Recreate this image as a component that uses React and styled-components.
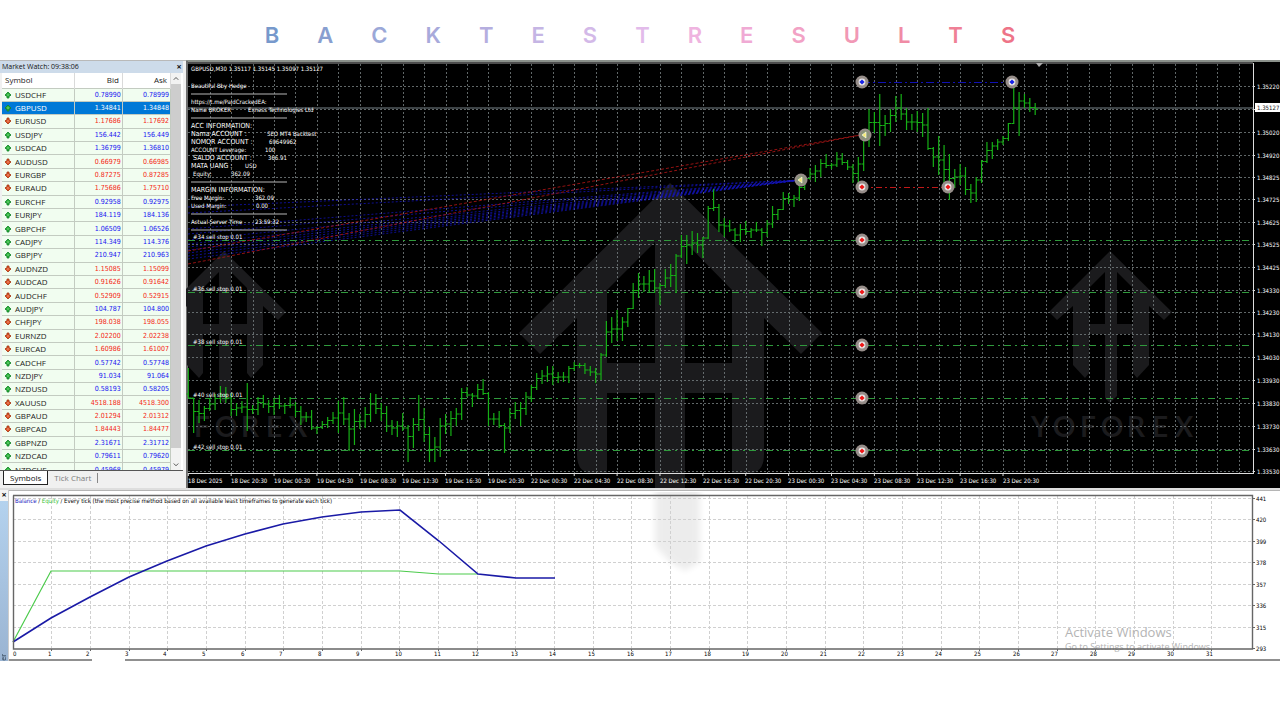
import React from 'react';
import styled, { createGlobalStyle } from 'styled-components';

const quotes = [
  ['USDCHF', '0.78990', '0.78999', 'up'],
  ['GBPUSD', '1.34841', '1.34848', 'up'],
  ['EURUSD', '1.17686', '1.17692', 'down'],
  ['USDJPY', '156.442', '156.449', 'up'],
  ['USDCAD', '1.36799', '1.36810', 'up'],
  ['AUDUSD', '0.66979', '0.66985', 'down'],
  ['EURGBP', '0.87275', '0.87285', 'down'],
  ['EURAUD', '1.75686', '1.75710', 'down'],
  ['EURCHF', '0.92958', '0.92975', 'up'],
  ['EURJPY', '184.119', '184.136', 'up'],
  ['GBPCHF', '1.06509', '1.06526', 'up'],
  ['CADJPY', '114.349', '114.376', 'up'],
  ['GBPJPY', '210.947', '210.963', 'up'],
  ['AUDNZD', '1.15085', '1.15099', 'down'],
  ['AUDCAD', '0.91626', '0.91642', 'down'],
  ['AUDCHF', '0.52909', '0.52915', 'down'],
  ['AUDJPY', '104.787', '104.800', 'up'],
  ['CHFJPY', '198.038', '198.055', 'down'],
  ['EURNZD', '2.02200', '2.02238', 'down'],
  ['EURCAD', '1.60986', '1.61007', 'down'],
  ['CADCHF', '0.57742', '0.57748', 'up'],
  ['NZDJPY', '91.034', '91.064', 'up'],
  ['NZDUSD', '0.58193', '0.58205', 'up'],
  ['XAUUSD', '4518.188', '4518.300', 'down'],
  ['GBPAUD', '2.01294', '2.01312', 'down'],
  ['GBPCAD', '1.84443', '1.84477', 'down'],
  ['GBPNZD', '2.31671', '2.31712', 'up'],
  ['NZDCAD', '0.79611', '0.79620', 'up'],
  ['NZDCHF', '0.45968', '0.45979', 'up'],
];

// [high, low] of every M30 bar, in chart units
const bars = [
  [368, 398], [398, 433], [400, 423], [406, 421], [398, 411], [394, 410], [386, 403], [387, 403],
  [393, 416], [403, 416], [401, 413], [383, 431], [405, 414], [397, 415], [395, 408], [400, 413],
  [398, 415], [395, 409], [403, 414], [397, 408], [402, 417], [406, 425], [412, 422], [410, 430],
  [426, 434], [421, 429], [417, 428], [412, 424], [401, 433], [397, 425], [413, 451], [409, 445],
  [414, 429], [407, 428], [393, 422], [394, 414], [403, 421], [406, 432], [420, 435], [421, 437],
  [413, 431], [425, 462], [418, 448], [395, 431], [408, 442], [427, 462], [437, 462], [418, 457],
  [414, 434], [411, 436], [408, 426], [388, 420], [387, 397], [393, 407], [384, 399], [379, 395],
  [392, 426], [413, 425], [411, 428], [423, 453], [408, 433], [402, 419], [402, 426], [392, 415],
  [385, 402], [373, 390], [370, 384], [366, 382], [366, 385], [372, 383], [372, 382], [366, 383],
  [362, 371], [363, 368], [363, 374], [366, 376], [368, 383], [353, 380], [321, 357], [317, 343],
  [310, 341], [317, 341], [308, 327], [283, 309], [273, 298], [276, 292], [270, 292], [269, 293],
  [283, 305], [269, 288], [264, 287], [254, 293], [235, 258], [235, 264], [231, 255], [233, 253],
  [237, 258], [206, 239], [189, 211], [204, 232], [218, 237], [220, 232], [228, 242], [224, 242],
  [221, 235], [228, 238], [222, 232], [228, 246], [220, 237], [206, 228], [209, 220], [192, 210],
  [193, 204], [195, 207], [185, 201], [177, 190], [168, 180], [165, 182], [159, 177], [154, 168],
  [163, 169], [152, 167], [153, 165], [160, 170], [164, 183], [157, 185], [132, 171], [109, 147],
  [112, 133], [94, 146], [115, 136], [109, 132], [96, 122], [94, 120], [108, 130], [114, 130],
  [111, 132], [113, 137], [108, 150], [147, 167], [136, 175], [145, 185], [154, 200], [169, 188],
  [164, 185], [167, 195], [184, 203], [177, 202], [160, 183], [142, 163], [142, 159], [139, 150],
  [136, 145], [123, 141], [85, 124], [92, 136], [94, 108], [98, 112], [103, 115],
];

const prices = [
  ['1.35220', 86], ['', 109], ['1.35020', 132], ['1.34920', 155], ['1.34825', 177],
  ['1.34725', 199], ['1.34625', 222], ['1.34525', 244], ['1.34425', 267], ['1.34330', 290],
  ['1.34230', 312], ['1.34130', 334], ['1.34030', 357], ['1.33930', 380], ['1.33830', 403],
  ['1.33730', 426], ['1.33630', 449], ['1.33530', 471],
];

const times = [
  '18 Dec 2025', '18 Dec 20:30', '19 Dec 00:30', '19 Dec 04:30', '19 Dec 08:30', '19 Dec 12:30',
  '19 Dec 16:30', '19 Dec 20:30', '22 Dec 00:30', '22 Dec 04:30', '22 Dec 08:30', '22 Dec 12:30',
  '22 Dec 16:30', '22 Dec 20:30', '23 Dec 00:30', '23 Dec 04:30', '23 Dec 08:30', '23 Dec 12:30',
  '23 Dec 16:30', '23 Dec 20:30',
];

// label, label x, value, value x, baseline, capitals
const info = [
  ['Beautiful Bby Hedge', 191, '', 0, 88],
  ['https://t.me/PaidCrackedEA:', 191, '', 0, 104],
  ['Name BROKER', 191, 'Exness Technologies Ltd', 248, 112],
  ['ACC INFORMATION:', 191, '', 0, 128, true],
  ['Nama ACCOUNT :', 191, 'SEO MT4 Backtest', 267, 136, true],
  ['NOMOR ACCOUNT :', 191, '69649962', 269, 144, true],
  ['ACCOUNT  Leverage:', 191, '100', 265, 152],
  ['SALDO ACCOUNT :', 193, '366.91', 268, 160, true],
  ['MATA UANG :', 191, 'USD', 245, 168, true],
  ['Equity:', 193, '362.09', 231, 176],
  ['MARGIN INFORMATION:', 191, '', 0, 192, true],
  ['Free Margin:', 191, '362.09', 255, 200],
  ['Used Margin:', 191, '0.00', 256, 208],
  ['Actual Server Time', 191, '23:59:32', 255, 224],
];

const rules = [94, 118, 182, 214, 230];
const stops = [['#34', 240], ['#36', 292], ['#38', 345], ['#40', 398], ['#42', 450]];
const blueStarts = [207, 213, 229, 234, 240, 244, 247, 250, 253, 256, 259];
const markers = [
  [862, 82, 'buy'], [1012, 82, 'buy'], [801, 180, 'close'], [865, 135, 'close'],
  [862, 187, 'sell'], [948, 187, 'sell'], [862, 240, 'sell'], [862, 292, 'sell'],
  [862, 345, 'sell'], [862, 398, 'sell'], [862, 451, 'sell'],
];

const balance = '13,642 51,618 90,597 129,577 167,561 206,546 245,534 283,524 322,517 361,512 400,510 439,541 478,574 516,578 555,578';
const equity = '13,642 51,571 400,571 439,574 478,574';
const levels = [['441', 498], ['420', 519], ['399', 541], ['378', 562], ['357', 584], ['336', 605], ['315', 627], ['293', 648]];

const heading = [
  ['B', '#7799cc'], ['A', '#889fd0'], ['C', '#9ba8d8'], ['K', '#a8aadb'], ['T', '#b5aedf'],
  ['E', '#c5b5e4'], ['S', '#d3b9e8'], ['T', '#e2bbea'], ['R', '#efb4e0'], ['E', '#f0aad4'],
  ['S', '#f2a2c5'], ['U', '#f198b5'], ['L', '#f08ba5'], ['T', '#ef8096'], ['S', '#ee7488'],
];

const barX = (i) => 188.3 + i * 5.36;

const closeOf = (i) => {
  const next = bars[i + 1] || bars[i];
  const mid = (Math.max(bars[i][0], next[0]) + Math.min(bars[i][1], next[1])) / 2;
  return Math.min(bars[i][1], Math.max(bars[i][0], mid));
};

const barPath = bars
  .map(([high, low], i) => {
    const x = barX(i);
    const open = i ? Math.min(low, Math.max(high, closeOf(i - 1))) : high + 26;
    return `M${x} ${high}V${low}M${x - 2} ${open}H${x}M${x} ${closeOf(i)}H${x + 3}`;
  })
  .join('');

const QuoteIcon = ({ direction }) => {
  const color = direction === 'up' ? '#2db43c' : '#e0552b';
  const edge = direction === 'up' ? '#13802a' : '#a33612';
  const d = direction === 'up' ? 'M4 1L7 4L6 5H5V7H3V5H2L1 4Z' : 'M3 1H5V3H6L7 4L4 7L1 4L2 3H3Z';
  return (
    <Icon viewBox="0 0 8 8" aria-hidden="true">
      <path d={d} fill={color} stroke={edge} strokeWidth="0.8" />
      <circle cx="4" cy="4" r="0.8" fill="#fff" opacity="0.4" />
    </Icon>
  );
};

const SmallLogo = ({ x, from = 0 }) => (
  <g transform={`translate(${x} 0)`}>
    <path d="M0 251L62 312L54 320L39 306V365L27 378L23 373V334H7V396L0 403L-5 398V334H-21V373L-25 378L-37 365V306L-53 320L-61 312ZM-5 272L-21 288V324H-5ZM7 272V324H23V288Z" />
    {'YOFOREX'.split('').map((letter, i) => i >= from && (
      <text key={i} x={-70 + i * 24} y="437">{letter}</text>
    ))}
  </g>
);

const Marker = ({ x, y, kind }) => (
  <g transform={`translate(${x} ${y})`}>
    <circle r="6.5" fill="#968d89" />
    {kind === 'close' ? (
      <>
        <circle r="4.5" fill="#8a9478" />
        <path d="M-3 0L1 -3V3Z" fill="#f3e96b" stroke="#fff" strokeWidth="0.6" />
      </>
    ) : (
      <>
        <circle r="3.4" fill="#fff" opacity="0.8" />
        <path d="M-2.6 0L0 -2.6L2.6 0L0 2.6Z" fill={kind === 'buy' ? '#1520e8' : '#ee1717'} />
      </>
    )}
  </g>
);

const PriceChart = () => (
  <Drawing viewBox="186 60 1094 428" role="img" aria-label="GBPUSD M30 chart">
    <rect x="186" y="60" width="1094" height="428" fill="#000" />
    <path d="M186 61H1280" stroke="#8b918b" strokeWidth="2" />
    <path d="M187 61V488" stroke="#6d6d6d" strokeWidth="2" />
    <path d="M188 63H1253" stroke="#9a9a9a" />

    <Watermark>
      <path d="M670 183L822 333L801 354L764 318V455Q764 474 746 474H732V393H685V488H655V393H607V474H595Q577 474 577 455V318L540 354L519 333ZM655 242L607 290V363H655ZM685 242V363H732V290Z" />
      <SmallLogo x={224} from={2} />
      <SmallLogo x={1110} />
    </Watermark>

    <g stroke="#71797b" strokeDasharray="2 2" opacity="0.85">
      {Array.from({ length: 49 }, (_, i) => (
        <path key={i} d={`M${Math.round(209.7 + i * 21.44) + 0.5} 64V473`} />
      ))}
      {prices.map(([, y]) => <path key={y} d={`M188 ${y + 0.5}H1253`} />)}
    </g>

    <g stroke="#1515c8" strokeDasharray="2 2" strokeWidth="0.8" opacity="0.9">
      {blueStarts.map((y) => <path key={y} d={`M188 ${y}L801 180`} />)}
    </g>
    <g stroke="#c01818" strokeDasharray="3 2" strokeWidth="0.9" opacity="0.85">
      <path d="M188 251L866 134" />
      <path d="M188 264L866 134" />
    </g>
    <path d="M862 82.5H1012" stroke="#1010b4" strokeDasharray="8 3 2 3" />
    <path d="M862 187.5H948" stroke="#c01818" strokeDasharray="6 3 2 3" />
    <path d="M188 108H1253" stroke="#50585c" strokeWidth="1.6" />
    <g stroke="#2f9a3c" strokeDasharray="7 4 2 4">
      {stops.map(([id, y]) => <path key={id} d={`M188 ${y + 0.5}H1253`} />)}
    </g>

    <path d={barPath} stroke="#16b016" strokeWidth="1.2" fill="none" />
    <path d="M1036 63H1043L1039 67Z" fill="#aaa" />
    {markers.map(([x, y, kind]) => <Marker key={`${x}-${y}`} x={x} y={y} kind={kind} />)}

    <path d="M1253.5 63V474M188 473.5H1253" stroke="#ddd" fill="none" />
    <path
      d={times.map((_, i) => `M${barX(i * 8)} 473V476`).join('') + prices.map(([, y]) => `M1253 ${y}.5H1255`).join('')}
      stroke="#ddd"
    />

    <ChartText>
      <text x="191" y="71">GBPUSD,M30  1.35117 1.35145 1.35097 1.35127</text>
      {info.map(([label, x, value, valueX, y, caps]) => (
        <React.Fragment key={label}>
          <InfoLabel x={x} y={y} $caps={caps}>{label}</InfoLabel>
          {value && <text x={valueX} y={y}>{value}</text>}
        </React.Fragment>
      ))}
      {stops.map(([id, y]) => <text key={id} x="193" y={y - 1}>{id} sell stop 0.01</text>)}
      {prices.map(([price, y]) => price && <text key={price} x="1257" y={y + 3}>{price}</text>)}
      {times.map((time, i) => <text key={time} x={188 + Math.round(i * 42.88)} y="483">{time}</text>)}
    </ChartText>
    {rules.map((y) => <path key={y} d={`M191 ${y}H287`} stroke="#b5b5b5" strokeWidth="1.2" />)}
    <rect x="1255" y="103" width="25" height="9" fill="#fff" />
    <CurrentPrice x="1257" y="110">1.35127</CurrentPrice>
  </Drawing>
);

const TesterChart = () => (
  <Drawing viewBox="9 492 1271 167" role="img" aria-label="Balance and equity graph">
    <defs>
      <filter id="soft" x="-20%" y="-20%" width="140%" height="140%">
        <feGaussianBlur stdDeviation="3" />
      </filter>
    </defs>
    <g fill="#000" opacity="0.07" filter="url(#soft)">
      <path d="M655 480H700V562L685 571L670 562L655 546Z" />
    </g>
    <g stroke="#d0d0d0" strokeDasharray="3 2">
      {Array.from({ length: 31 }, (_, i) => (
        <path key={i} d={`M${Math.round(51.2 + i * 38.67)}.5 496V648`} />
      ))}
      {levels.slice(0, 7).map(([value, y]) => <path key={value} d={`M13 ${y}.5H1252`} />)}
    </g>
    <polyline points={equity} fill="none" stroke="#4ccb4c" strokeWidth="1.2" />
    <polyline points={balance} fill="none" stroke="#1a1aa6" strokeWidth="1.6" />
    <WindowsNote>
      <text className="big" x="1065" y="637">Activate Windows</text>
      <text className="small" x="1065" y="650">Go to Settings to activate Windows.</text>
    </WindowsNote>
    <path d="M13 495.5H1252.5V649H13.5V495.5" fill="none" stroke="#666" strokeWidth="1.4" />
    <path
      d={levels.map(([, y]) => `M1252 ${y}.5H1255`).join('') + Array.from({ length: 31 }, (_, i) => `M${Math.round(51.2 + i * 38.67)}.5 649V651`).join('')}
      stroke="#666"
    />
    <TesterText>
      <text x="15" y="503">
        <tspan fill="#1a1ac0">Balance</tspan> / <tspan fill="#35c335">Equity</tspan> / Every tick (the most precise method based on all available least timeframes to generate each tick)
      </text>
      {levels.map(([value, y]) => <text key={value} x="1256" y={y + 3}>{value}</text>)}
      {Array.from({ length: 32 }, (_, i) => (
        <text key={i} x={i ? 9 + Math.round(i * 38.6) : 13} y="656">{i}</text>
      ))}
    </TesterText>
  </Drawing>
);

const App = () => (
  <Page>
    <GlobalStyle />
    <Heading aria-label="BACKTEST RESULTS">
      {heading.map(([letter, color], i) => <Letter key={i} $color={color}>{letter}</Letter>)}
    </Heading>

    <Workspace>
      <MarketWatch>
        <TitleBar>
          <span>Market Watch: 09:38:06</span>
          <CloseButton aria-label="Close market watch">×</CloseButton>
        </TitleBar>
        <QuoteArea>
          <QuoteTable>
            <thead>
              <tr>
                <HeadCell>Symbol</HeadCell>
                <HeadCell $right>Bid</HeadCell>
                <HeadCell $right>Ask</HeadCell>
              </tr>
            </thead>
            <tbody>
              {quotes.map(([symbol, bid, ask, direction]) => (
                <QuoteRow key={symbol} $selected={symbol === 'GBPUSD'}>
                  <SymbolCell>
                    <SymbolName><QuoteIcon direction={direction} />{symbol}</SymbolName>
                  </SymbolCell>
                  <PriceCell $direction={direction}>{bid}</PriceCell>
                  <PriceCell $direction={direction}>{ask}</PriceCell>
                </QuoteRow>
              ))}
            </tbody>
          </QuoteTable>
          <ScrollBar>
            <Chevron viewBox="0 0 8 6"><path d="M1 4L4 1L7 4" /></Chevron>
            <Thumb />
            <Chevron viewBox="0 0 8 6"><path d="M1 1L4 4L7 1" /></Chevron>
          </ScrollBar>
        </QuoteArea>
        <Tabs>
          <Tab $active>Symbols</Tab>
          <Tab>Tick Chart</Tab>
          <TabDivider />
        </Tabs>
      </MarketWatch>
      <ChartPanel><PriceChart /></ChartPanel>
    </Workspace>

    <Tester>
      <TesterSide>
        <CloseButton aria-label="Close tester">×</CloseButton>
        <SideLabel>er</SideLabel>
      </TesterSide>
      <TesterPanel>
        <TesterChart />
        <Footer><FooterGap /></Footer>
      </TesterPanel>
    </Tester>
  </Page>
);

const GlobalStyle = createGlobalStyle`
  * {
    box-sizing: border-box;
  }

  body {
    margin: 0;
    background: #fff;
    font-family: "Open Sans", "Noto Sans", sans-serif;
  }

  button {
    font-family: inherit;
    padding: 0;
    border: 0;
    background: none;
  }
`;

const Page = styled.main`
  min-height: 100vh;
  background: #fff;
`;

const Heading = styled.h1`
  display: flex;
  justify-content: center;
  align-items: center;
  gap: 38px;
  height: 60px;
  margin: 0;
  padding-top: 9px;
  font: 600 22px/26px Inter, sans-serif;
`;

const Letter = styled.span`
  color: ${(p) => p.$color};
`;

const Workspace = styled.section`
  display: flex;
  align-items: stretch;
`;

const MarketWatch = styled.aside`
  display: flex;
  flex-direction: column;
  flex: 0 0 186px;
  height: 428px;
  padding-right: 3px;
  background: #f0f0f0;
  border-top: 1px solid #b9b9b9;
`;

const TitleBar = styled.header`
  display: flex;
  justify-content: space-between;
  align-items: center;
  height: 12px;
  padding: 0 0 0 2px;
  background: #cddbea;
  color: #111;
  font-size: 7px;
  line-height: 10px;
`;

const CloseButton = styled.button`
  width: 8px;
  font-size: 9px;
  font-weight: 700;
  line-height: 8px;
  color: #111;
`;

const QuoteArea = styled.div`
  display: flex;
  flex: 1;
  min-height: 0;
  overflow: hidden;
  margin-left: 2px;
  background: #fff;
`;

const QuoteTable = styled.table`
  flex: 0 0 169px;
  width: 169px;
  height: 404px;
  table-layout: fixed;
  border-collapse: collapse;
  font-size: 8px;
  line-height: 10px;
`;

const HeadCell = styled.th`
  width: ${(p) => (p.$right ? '48px' : '72px')};
  height: 15px;
  padding: 0 3px;
  text-align: ${(p) => (p.$right ? 'right' : 'left')};
  font-weight: 400;
  color: #222;
  border-right: 1px solid #dadada;
`;

const SymbolCell = styled.td`
  padding: 0 2px;
  color: #1c221a;
  border: solid #c3cbc1;
  border-width: 1px 1px 1px 0;
`;

const SymbolName = styled.div`
  display: flex;
  align-items: center;
  gap: 3px;
`;

const PriceCell = styled.td`
  padding: 0 1px;
  text-align: right;
  font: 7px/10px "DejaVu Sans Condensed", "DejaVu Sans", sans-serif;
  color: ${(p) => (p.$direction === 'up' ? '#1414f0' : '#f51d14')};
  border: solid #c3cbc1;
  border-width: 1px 1px 1px 0;
`;

const QuoteRow = styled.tr`
  background: ${(p) => (p.$selected ? '#0078d7' : '#f1fdf0')};

  td {
    ${(p) => p.$selected && 'color: #fff;'}
  }
`;

const Icon = styled.svg`
  flex: none;
  width: 8px;
  height: 8px;
`;

const ScrollBar = styled.div`
  display: flex;
  flex-direction: column;
  align-items: center;
  width: 10px;
  padding: 3px 0 2px;
  background: #f2f2f2;
`;

const Chevron = styled.svg`
  width: 6px;
  height: 6px;
  fill: none;
  stroke: #222;
`;

const Thumb = styled.div`
  width: 10px;
  flex: 1;
  margin: 2px 0 14px;
  background: #cdcdcd;
`;

const Tabs = styled.nav`
  display: flex;
  height: 18px;
  padding: 0 3px 3px;
  border-top: 1px solid #555;
`;

const Tab = styled.button`
  padding: 0 6px;
  font-size: 8px;
  line-height: 12px;
  color: ${(p) => (p.$active ? '#111' : '#7d7d7d')};
  background: ${(p) => (p.$active ? '#fff' : 'transparent')};
  border: solid #222;
  border-width: ${(p) => (p.$active ? '0 1px 1px' : '0')};
`;

const TabDivider = styled.span`
  width: 1px;
  height: 10px;
  margin-top: 2px;
  background: #888;
`;

const ChartPanel = styled.div`
  flex: 1;
  min-width: 0;
  background: #000;
`;

const Drawing = styled.svg`
  display: block;
  width: 100%;
  height: auto;
`;

const Watermark = styled.g`
  fill: #1b1b1d;
  font: 700 28px Lato, sans-serif;
  text-anchor: middle;
`;

const ChartText = styled.g`
  fill: #fff;
  font: 6px "DejaVu Sans Condensed", "DejaVu Sans", sans-serif;
  white-space: pre;
`;

const InfoLabel = styled.text`
  font-size: ${(p) => (p.$caps ? '7px' : '6px')};
`;

const CurrentPrice = styled.text`
  fill: #111;
  font: 6px "DejaVu Sans Condensed", "DejaVu Sans", sans-serif;
`;

const TesterText = styled.g`
  fill: #000;
  font: 6px "DejaVu Sans Condensed", "DejaVu Sans", sans-serif;
`;

const WindowsNote = styled.g`
  fill: #b4b4b4;

  .big {
    font-size: 13px;
  }

  .small {
    font-size: 9px;
  }
`;

const Tester = styled.section`
  display: flex;
  border-top: 2px solid #dedede;
`;

const TesterSide = styled.aside`
  display: flex;
  flex-direction: column;
  justify-content: space-between;
  flex: 0 0 9px;
  padding-top: 1px;
  border-right: 1px solid #ccc;
  background: linear-gradient(#f4f4f4 11px, #b4d2ee 11px, #9ab4d2);
`;

const SideLabel = styled.span`
  font-size: 7px;
  line-height: 8px;
  writing-mode: vertical-rl;
  transform: rotate(180deg);
  color: #234;
`;

const TesterPanel = styled.div`
  flex: 1;
  min-width: 0;
  padding-top: 1px;
  border-top: 1px solid #b5b5b5;
`;

const Footer = styled.div`
  height: 2px;
  padding-left: 83px;
  background: #909090;
`;

const FooterGap = styled.div`
  width: 33px;
  height: 2px;
  background: #fff;
`;

export default App;
